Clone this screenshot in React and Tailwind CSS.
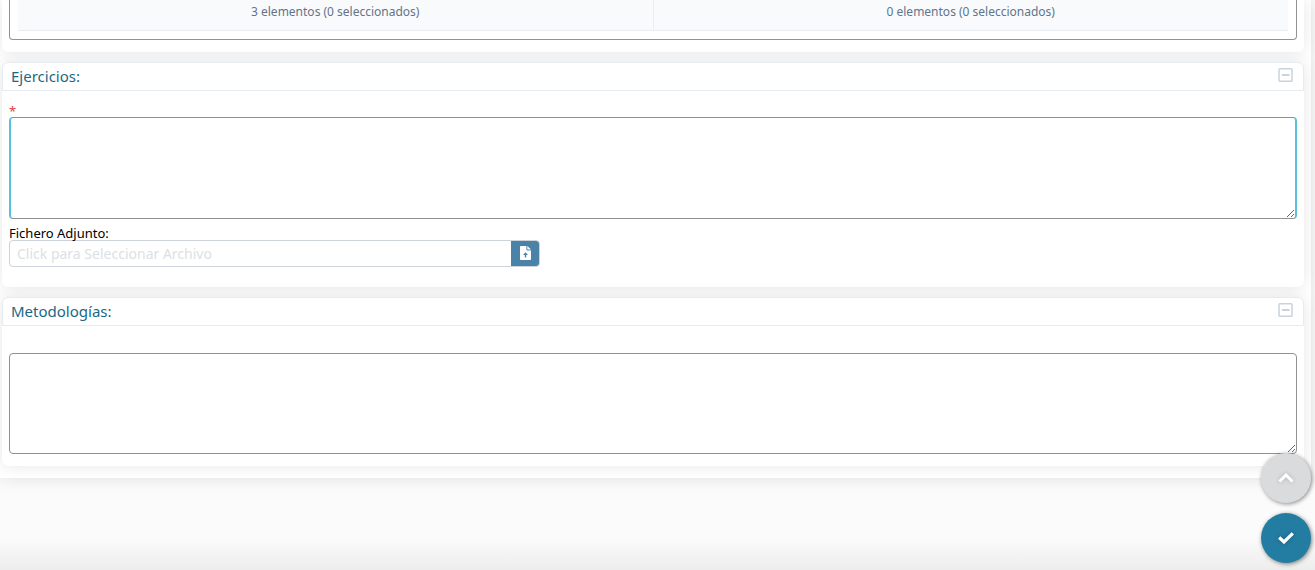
import React from "react";

const lists = [
  { id: "disponibles", text: "3 elementos (0 seleccionados)" },
  { id: "asignados", text: "0 elementos (0 seleccionados)" },
];

const Panel = ({ title, children }) => {
  return (
    <section className="rounded-md bg-white shadow-[0_0_16px_rgba(0,0,0,0.1)]">
      <header className="flex h-[29px] items-center justify-between rounded-t-md border border-[#e6ebf0] px-2">
        <h2 className="pb-0.5 text-[15px] leading-5 text-[#196984]">{title}</h2>
        <button type="button" aria-label="Contraer" className="mr-0.5 mb-1">
          <svg width="15" height="14" viewBox="0 0 15 14" fill="none" stroke="#c9d3dd">
            <rect x="1" y="0.75" width="13" height="12.5" rx="0.8" strokeWidth="1.5" />
            <path d="M4 7h7.5" strokeWidth="2" />
          </svg>
        </button>
      </header>
      {children}
    </section>
  );
};

const UploadIcon = () => (
  <svg width="11" height="14" viewBox="0 0 11 14" className="mb-0.5">
    <path d="M.8 0H6.4v3.6q0 .8.8.8H11v8.8a.8.8 0 0 1-.8.8H.8a.8.8 0 0 1-.8-.8V.8A.8.8 0 0 1 .8 0z" fill="#fff" />
    <path d="M7.3 0L11 3.6H8a.7.7 0 0 1-.7-.7z" fill="#fff" />
    <path d="M5.5 6.2L8 8.9H6.2v2.7H4.8V8.9H3z" fill="#4b82a8" />
  </svg>
);

const App = () => {
  return (
    <div className="min-h-screen bg-linear-to-t from-[#ededed] to-[#fbfbfb] to-[32px] font-['Noto_Sans','Open_Sans',sans-serif]">
      <main className="mr-1 flex flex-col gap-[10px] bg-white pr-[7px] pb-3 pl-0.5 shadow-[0_0_16px_rgba(0,0,0,0.11)]">
        {/* Listas */}
        <section className="rounded-b-md bg-white px-[7px] pb-3 shadow-[0_0_16px_rgba(0,0,0,0.1)]">
          <div className="rounded-b border border-t-0 border-[#929292] px-2 pb-2">
            <div className="flex border-b border-[#e9eef2] bg-[#f9fafc]">
              {lists.map((list) => (
                <p
                  key={list.id}
                  className="flex-1 border-r border-[#e9eef2] pt-1 pb-[10px] text-center text-xs leading-4 text-[#60758a] last:border-r-0"
                >
                  {list.text}
                </p>
              ))}
            </div>
          </div>
        </section>

        {/* Ejercicios */}
        <Panel title="Ejercicios:">
          <div className="px-[7px] pt-3 pb-5">
            <label htmlFor="ejercicios" className="block h-[14px] text-[13px] leading-4 text-[#d9433b]">
              *
            </label>
            <textarea
              id="ejercicios"
              aria-label="Ejercicios"
              required
              className="block h-[102px] w-full resize-y rounded border border-x-2 border-[#929292] border-x-[#5bc0de] p-1 text-sm shadow-none outline-none"
            />
            <label htmlFor="fichero" className="mt-2 block text-[13px] leading-[13px] text-black">
              Fichero Adjunto:
            </label>
            <div className="flex h-[27px] w-full max-w-[531px] overflow-hidden rounded border border-[#ccd3dc]">
              <input
                id="fichero"
                type="text"
                readOnly
                placeholder="Click para Seleccionar Archivo"
                className="min-w-0 flex-1 px-[7px] text-sm outline-none placeholder:text-[#dcdfe5]"
              />
              <button
                type="button"
                aria-label="Seleccionar archivo"
                className="flex w-7 items-center justify-center bg-[#4b82a8]"
              >
                <UploadIcon />
              </button>
            </div>
          </div>
        </Panel>

        {/* Metodologías */}
        <Panel title="Metodologías:">
          <div className="px-[7px] pt-[27px] pb-3">
            <textarea
              id="metodologias"
              aria-label="Metodologías"
              className="block h-[101px] w-full resize-y rounded border border-[#929292] p-1 text-sm outline-none"
            />
          </div>
        </Panel>
      </main>

      {/* Botones flotantes */}
      <div className="fixed right-1 bottom-[7px] flex flex-col gap-[10px]">
        <button
          type="button"
          aria-label="Subir"
          className="flex size-[50px] items-center justify-center rounded-full bg-[#dadbdd] shadow-[1px_1px_4px_rgba(0,0,0,0.45)]"
        >
          <svg
            width="16"
            height="10"
            viewBox="0 0 16 10"
            fill="none"
            stroke="#fff"
            strokeWidth="3"
            className="drop-shadow-[0_0_2px_rgba(0,0,0,0.2)]"
          >
            <path d="M1.5 8.5L8 2l6.5 6.5" />
          </svg>
        </button>
        <button
          type="button"
          aria-label="Guardar"
          className="flex size-[50px] items-center justify-center rounded-full bg-[#237da2] shadow-[1px_1px_4px_rgba(0,0,0,0.5)]"
        >
          <svg
            width="16"
            height="12"
            viewBox="0 0 16 12"
            fill="none"
            stroke="#fff"
            strokeWidth="3.2"
            className="drop-shadow-[0_0_2px_rgba(0,0,0,0.25)]"
          >
            <path d="M1.2 5.5L6 10l8.8-8.6" />
          </svg>
        </button>
      </div>
    </div>
  );
};

export default App;
